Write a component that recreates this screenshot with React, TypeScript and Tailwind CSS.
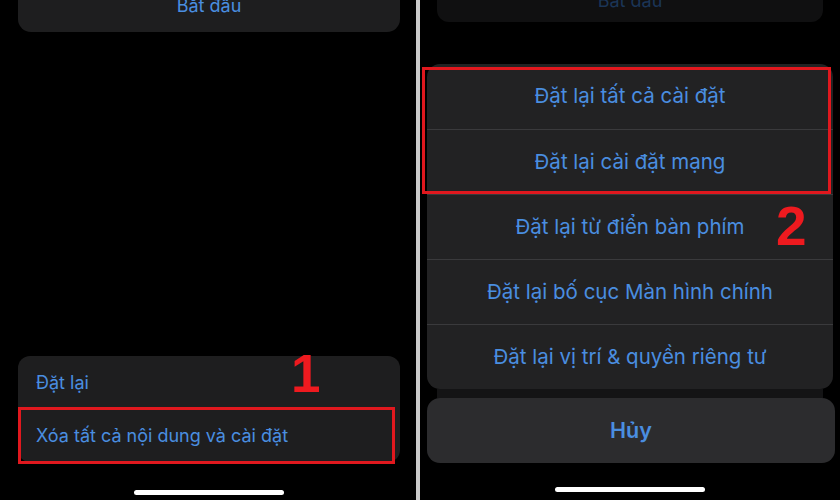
const font = { fontFamily: "Inter, 'Noto Sans', sans-serif" };

function HomeBar() {
  return <div className="h-[5px] w-[150px] rounded-full bg-white" />;
}

function LeftScreen() {
  return (
    <div className="flex h-full w-[418px] flex-col bg-black pl-[18px] pr-[16px]">
      <div className="flex h-[32px] items-end justify-center overflow-hidden rounded-b-[13px] bg-[#1e1e1f] pb-[15px]">
        <span className="text-[18px] leading-[22px] text-[#4a8ee0]">Bắt đầu</span>
      </div>
      <div className="flex-1" />
      <div className="relative flex h-[106px] flex-col rounded-[12px] bg-[#1e1e1f] text-[18px] text-[#4a8ee0]">
        <div className="flex h-[52px] items-center px-[18px]">Đặt lại</div>
        <div className="mx-[18px] h-px bg-[#333]" />
        <div className="flex flex-1 items-center px-[18px]">Xóa tất cả nội dung và cài đặt</div>
        <div className="absolute left-0 right-[5px] top-[51px] h-[57px] border-[3px] border-[#e0181e]" />
        <span
          className="absolute left-[273px] top-[-9px] text-[53px] font-bold leading-none text-[#ee1a1f]"
          style={{ fontFamily: "'Liberation Sans', Arial, sans-serif" }}
        >
          1
        </span>
      </div>
      <div className="flex h-[38px] justify-center pt-[28px]">
        <HomeBar />
      </div>
    </div>
  );
}

const actions = [
  "Đặt lại tất cả cài đặt",
  "Đặt lại cài đặt mạng",
  "Đặt lại từ điển bàn phím",
  "Đặt lại bố cục Màn hình chính",
  "Đặt lại vị trí & quyền riêng tư",
];

function RightScreen() {
  return (
    <div className="flex h-full flex-1 flex-col bg-black">
      <div className="mx-[17px] flex h-[22px] w-[386px] items-end justify-center overflow-hidden rounded-b-[12px] bg-[#101011] pb-[10px]">
        <span className="text-[18px] leading-[22px] text-[#1b3557]">Bắt đầu</span>
      </div>
      <div className="h-[42px]" />
      <div className="relative mx-[7px] flex flex-col rounded-[13px] bg-[#222223] text-[20.5px] text-[#4a8ee0]">
        {actions.map((a, i) => (
          <div
            key={a}
            className={`flex h-[65px] items-center justify-center ${i > 0 ? "border-t border-[#3a3a3c]" : ""}`}
          >
            {a}
          </div>
        ))}
        <div className="absolute left-[-5px] right-[2px] top-[3px] h-[127px] border-[3px] border-[#e0181e]" />
        <span
          className="absolute left-[349px] top-[135px] text-[55px] font-bold leading-none text-[#ee1a1f]"
          style={{ fontFamily: "'Liberation Sans', Arial, sans-serif" }}
        >
          2
        </span>
      </div>
      <div className="mx-[17px] h-[9px] bg-[#141415]" />
      <div className="ml-[7px] mr-[5px] flex h-[65px] items-center justify-center rounded-[13px] bg-[#2c2c2e] text-[21.5px] font-semibold text-[#4a8ee0]">
        Hủy
      </div>
      <div className="flex flex-1 justify-center pt-[24px]">
        <HomeBar />
      </div>
    </div>
  );
}

export default function App() {
  return (
    <div className="flex h-[500px] w-[840px] overflow-hidden bg-black" style={font}>
      <LeftScreen />
      <div className="h-full w-[4px] bg-[#cacaca]" />
      <RightScreen />
    </div>
  );
}
